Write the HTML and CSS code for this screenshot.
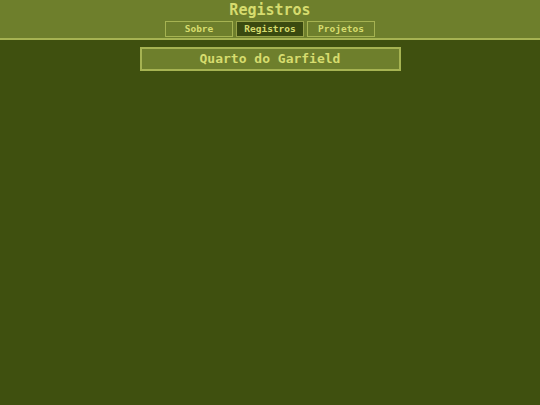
FILE: index.html
```html
<!DOCTYPE html>
<html lang="pt">
<head>
<meta charset="utf-8">
<title>Registros</title>
<link rel="stylesheet" href="styles.css">
</head>
<body>
<header class="top">
  <h1 class="title">Registros</h1>
  <nav class="nav">
    <a class="btn">Sobre</a>
    <a class="btn active">Registros</a>
    <a class="btn">Projetos</a>
  </nav>
</header>
<main class="main">
  <div class="card">Quarto do Garfield</div>
</main>
</body>
</html>
```
FILE: styles.css
```css
html, body {
  margin: 0;
  padding: 0;
  height: 100%;
}
body {
  background: #3f500f;
  font-family: "DejaVu Sans Mono", monospace;
  font-weight: bold;
  color: #d6dc6e;
}
.top {
  background: #6e7f2c;
  border-bottom: 2px solid #a6b352;
  height: 38px;
  display: flex;
  flex-direction: column;
  align-items: center;
}
.title {
  margin: 0;
  font-size: 15px;
  line-height: 20px;
  height: 21px;
  font-weight: bold;
}
.nav {
  display: flex;
  gap: 3px;
}
.btn {
  box-sizing: border-box;
  width: 68px;
  height: 16px;
  border: 1px solid #a6b352;
  font-size: 9.5px;
  line-height: 14px;
  text-align: center;
}
.btn.active {
  background: #3a4a10;
  border-color: #98a348;
}
.main {
  display: flex;
  justify-content: center;
  padding-top: 7px;
}
.card {
  box-sizing: border-box;
  width: 261px;
  height: 24px;
  background: #6e7f2c;
  border: 2px solid #a6b352;
  font-size: 13px;
  line-height: 20px;
  text-align: center;
}
```
